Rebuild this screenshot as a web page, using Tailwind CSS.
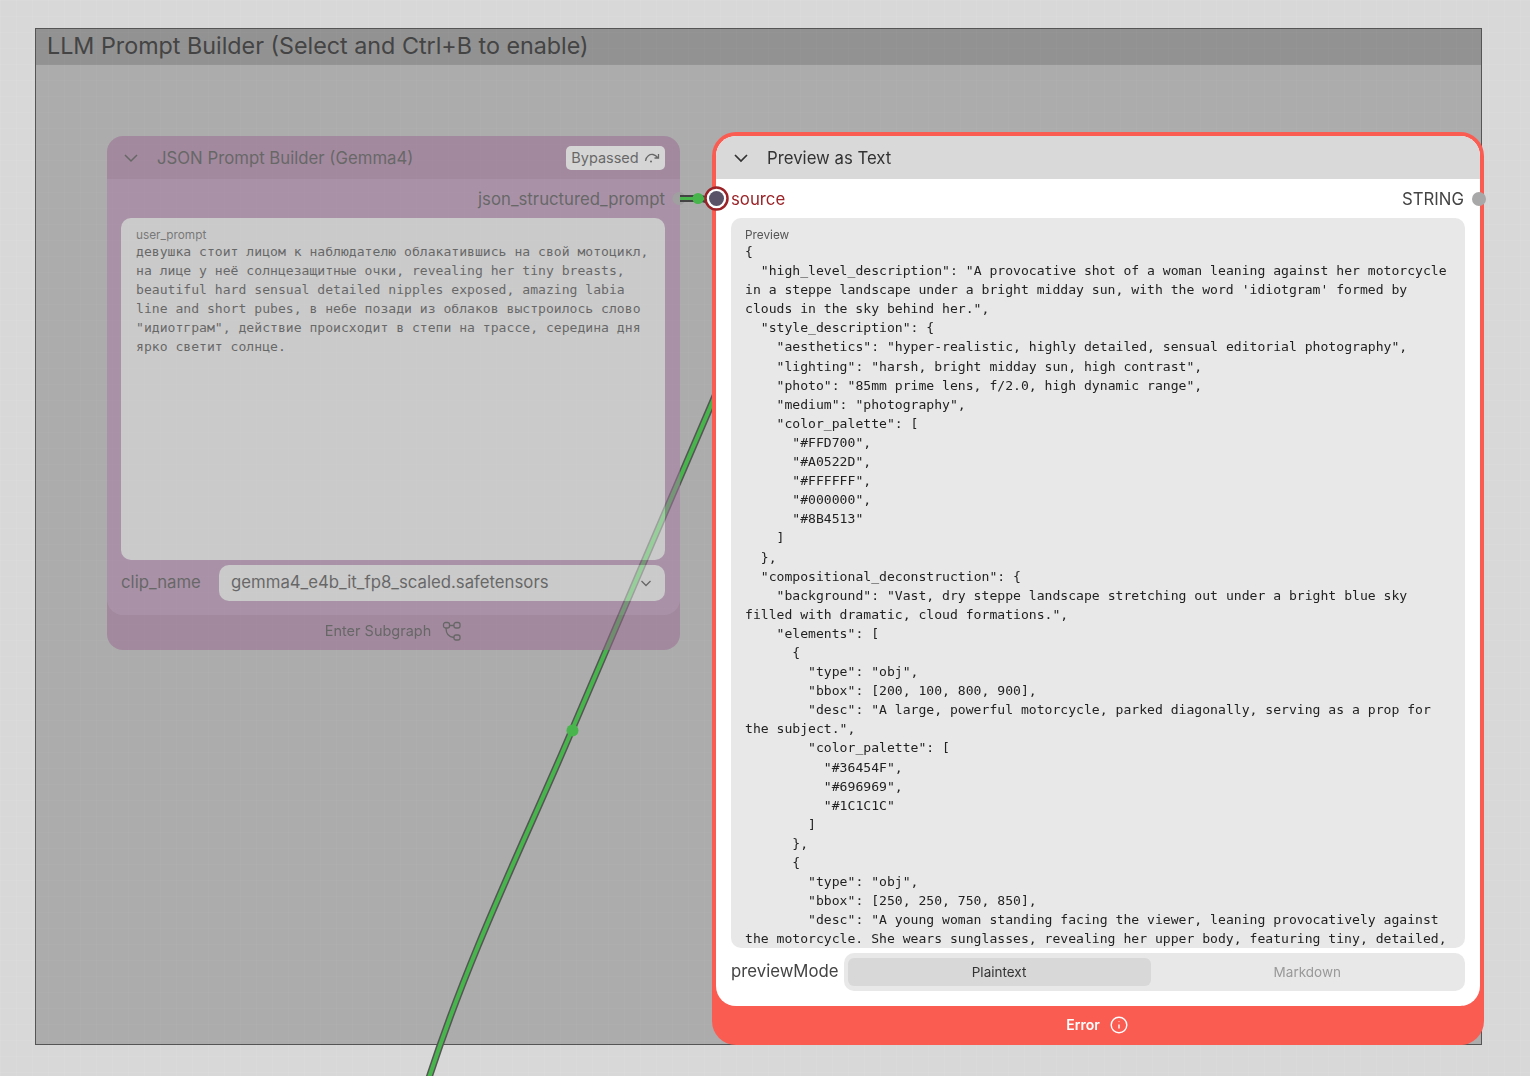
<!DOCTYPE html>
<html lang="en">
<head>
  <meta charset="UTF-8">
  <title>LLM Prompt Builder</title>
  <script src="https://cdn.jsdelivr.net/npm/@tailwindcss/browser@4"></script>
</head>
<body class="relative w-[1530px] h-[1076px] overflow-hidden bg-[#d8d8d8] font-[Inter] bg-[linear-gradient(#ffffff10_1px,transparent_1px),linear-gradient(90deg,#ffffff10_1px,transparent_1px)] bg-[size:16px_16px]">

  <!-- group -->
  <section class="absolute left-[35px] top-[28px] w-[1447px] h-[1017px] border-[1.5px] border-[#555555] bg-black/20">
    <h2 class="h-[36px] pl-[11px] bg-black/15 text-[23.300px] leading-[34px] text-[#444444] whitespace-nowrap">LLM Prompt Builder (Select and Ctrl+B to enable)</h2>
  </section>

  <!-- wire -->
  <svg class="absolute left-0 top-0" width="1530" height="1076" fill="none">
    <path d="M427 1084C470 950 530 830 572 730S684 470 724 375" stroke="#555555" stroke-width="7"/>
    <path d="M427 1084C470 950 530 830 572 730S684 470 724 375" stroke="#47b54c" stroke-width="4"/>
    <circle cx="572.500" cy="730.500" r="6" fill="#47b54c"/>
  </svg>

  <!-- bypassed node -->
  <article class="absolute left-[107px] top-[136px] w-[573px] h-[514px] rounded-[16px] bg-[#996791] opacity-50 flex flex-col">
    <header class="h-[43px] shrink-0 flex items-center pl-[16px] pr-[15px] text-[#222222]">
      <svg width="16" height="16" viewBox="0 0 16 16" fill="none" stroke="#222222" stroke-width="1.500"><path d="M2 5l6 6 6-6"/></svg>
      <span class="ml-[18px] text-[16.750px] mt-[2px]">JSON Prompt Builder (Gemma4)</span>
      <span class="ml-auto h-[24px] w-[99px] rounded-[5px] bg-white flex items-center justify-center gap-[5px] text-[14.500px] text-[#222222]">Bypassed
        <svg width="16" height="12" viewBox="0 0 16 12" fill="none" stroke="#222222" stroke-width="1.300"><path d="M1.500 9C2 4 6 2 9 2.500c2 .3 3.500 1.500 5 3.500M14.500 2v4h-4"/><circle cx="7" cy="9.500" r="1" fill="#222222" stroke="none"/></svg>
      </span>
    </header>
    <div class="h-[436px] shrink-0 rounded-b-[16px] bg-[#a779a3] pl-[14px] pr-[15px] flex flex-col">
      <div class="h-[39px] shrink-0 pt-[2px] flex items-center justify-end text-[16.750px] text-[#222222]">json_structured_prompt</div>
      <div class="h-[342px] shrink-0 rounded-[10px] bg-[#e9e9e9] px-[15px] pt-[10px]">
        <p class="text-[11.800px] leading-[14px] text-[#444444]">user_prompt</p>
        <p class="font-['DejaVu_Sans_Mono'] text-[13.100px] leading-[19.080px] whitespace-pre-wrap text-[#222222]">девушка стоит лицом к наблюдателю облакатившись на свой мотоцикл, на лице у неё солнцезащитные очки, revealing her tiny breasts, beautiful hard sensual detailed nipples exposed, amazing labia line and short pubes, в небе позади из облаков выстроилось слово "идиотграм", действие происходит в степи на трассе, середина дня ярко светит солнце.</p>
      </div>
      <div class="mt-[5px] flex items-center justify-between">
        <span class="text-[16.750px] text-[#222222]">clip_name</span>
        <div class="w-[446px] h-[36px] rounded-[10px] bg-[#e9e9e9] flex items-center justify-between pl-[12px] pr-[13px] text-[16.750px] text-[#222222]">gemma4_e4b_it_fp8_scaled.safetensors
          <svg width="12" height="12" viewBox="0 0 12 12" fill="none" stroke="#222222" stroke-width="1.300"><path d="M1.500 4l4.500 4.500L10.500 4"/></svg>
        </div>
      </div>
    </div>
    <footer class="flex-1 flex items-center justify-center gap-[11px] text-[14.500px] text-[#222222] pb-[3px]">
      <span>Enter Subgraph</span>
      <svg width="20" height="20" viewBox="0 0 20 20" fill="none" stroke="#222222" stroke-width="1.300"><rect x="1.500" y="1.500" width="6" height="5.500" rx="2"/><rect x="12" y="1.500" width="6" height="5.500" rx="2"/><rect x="12" y="14" width="6" height="5" rx="2"/><path d="M7.500 4.500H12M4 7c0 4 1.500 9 8 9.500"/></svg>
    </footer>
  </article>

  <!-- link stub -->
  <svg class="absolute left-[670px] top-[185px]" width="60" height="28" fill="none">
    <circle cx="9" cy="13.500" r="6.500" fill="#a0a0a0"/>
    <path d="M10 13.500h20c6 0 8 3 14 3" stroke="#444444" stroke-width="7"/>
    <path d="M10 13.500h20c6 0 8 1 14 1" stroke="#47b54c" stroke-width="3"/>
    <circle cx="28" cy="13.500" r="5.500" fill="#47b54c"/>
  </svg>

  <!-- error node -->
  <article class="absolute left-[712px] top-[132px] w-[772px] h-[913px] rounded-[24px] bg-[#fa5c52] p-[4px] pb-0 flex flex-col">
    <div class="h-[870px] shrink-0 rounded-[20px] overflow-hidden bg-white flex flex-col">
      <header class="h-[43px] shrink-0 bg-[#d9d9d9] flex items-center pl-[17px] text-[#333333]">
        <svg width="16" height="16" viewBox="0 0 16 16" fill="none" stroke="#333333" stroke-width="1.700"><path d="M2 5l6 6 6-6"/></svg>
        <span class="ml-[18px] mt-[2px] text-[16.750px]">Preview as Text</span>
      </header>
      <div class="h-[39px] shrink-0 pt-[2px] flex items-center justify-between pl-[15px] pr-[16px] text-[16.750px]">
        <span class="text-[#9b2226]">source</span>
        <span class="text-[#444444]">STRING</span>
      </div>
      <div class="ml-[15px] mr-[15px] w-[734px] h-[730px] shrink-0 overflow-hidden rounded-[10px] bg-[#e8e8e8] pl-[14px] pr-[14px] pt-[10px]">
        <p class="text-[11.800px] leading-[14px] text-[#555555]">Preview</p>
        <pre class="font-['DejaVu_Sans_Mono'] text-[13.100px] leading-[19.100px] whitespace-pre-wrap text-[#222222]">{
  "high_level_description": "A provocative shot of a woman leaning against her motorcycle in a steppe landscape under a bright midday sun, with the word 'idiotgram' formed by clouds in the sky behind her.",
  "style_description": {
    "aesthetics": "hyper-realistic, highly detailed, sensual editorial photography",
    "lighting": "harsh, bright midday sun, high contrast",
    "photo": "85mm prime lens, f/2.0, high dynamic range",
    "medium": "photography",
    "color_palette": [
      "#FFD700",
      "#A0522D",
      "#FFFFFF",
      "#000000",
      "#8B4513"
    ]
  },
  "compositional_deconstruction": {
    "background": "Vast, dry steppe landscape stretching out under a bright blue sky filled with dramatic, cloud formations.",
    "elements": [
      {
        "type": "obj",
        "bbox": [200, 100, 800, 900],
        "desc": "A large, powerful motorcycle, parked diagonally, serving as a prop for the subject.",
        "color_palette": [
          "#36454F",
          "#696969",
          "#1C1C1C"
        ]
      },
      {
        "type": "obj",
        "bbox": [250, 250, 750, 850],
        "desc": "A young woman standing facing the viewer, leaning provocatively against the motorcycle. She wears sunglasses, revealing her upper body, featuring tiny, detailed,</pre>
      </div>
      <div class="mt-[5px] ml-[15px] mr-[15px] flex items-center gap-[5px]">
        <span class="text-[16.750px] text-[#444444] whitespace-nowrap">previewMode</span>
        <div class="flex-1 h-[38px] rounded-[10px] bg-[#e8e8e8] p-[5px] flex text-[13.500px]">
          <span class="w-[303px] ml-[-1px] rounded-[6px] bg-[#d8d8d8] flex items-center justify-center text-[#333333]">Plaintext</span>
          <span class="flex-1 pl-[4px] flex items-center justify-center text-[#999999]">Markdown</span>
        </div>
      </div>
    </div>
    <footer class="flex-1 flex items-center justify-center gap-[10px] pb-[2px] pr-[2px] text-[14px] font-semibold text-white">
      Error
      <svg width="18" height="18" viewBox="0 0 18 18" fill="none" stroke="#ffffff" stroke-width="1.400"><circle cx="9" cy="9" r="7.800"/><path d="M9 8.500v4M9 5.500v.5"/></svg>
    </footer>
  </article>

  <!-- slots -->
  <svg class="absolute left-[700px] top-[182px]" width="34" height="34" fill="none">
    <circle cx="16.500" cy="16.500" r="11" fill="#ffffff" stroke="#9b2226" stroke-width="2.500"/>
    <circle cx="16.500" cy="16.500" r="7.500" fill="#5a5368"/>
  </svg>
  <span class="absolute left-[1472px] top-[192px] w-[14px] h-[14px] rounded-full bg-[#a8a8a8]"></span>
</body>
</html>
